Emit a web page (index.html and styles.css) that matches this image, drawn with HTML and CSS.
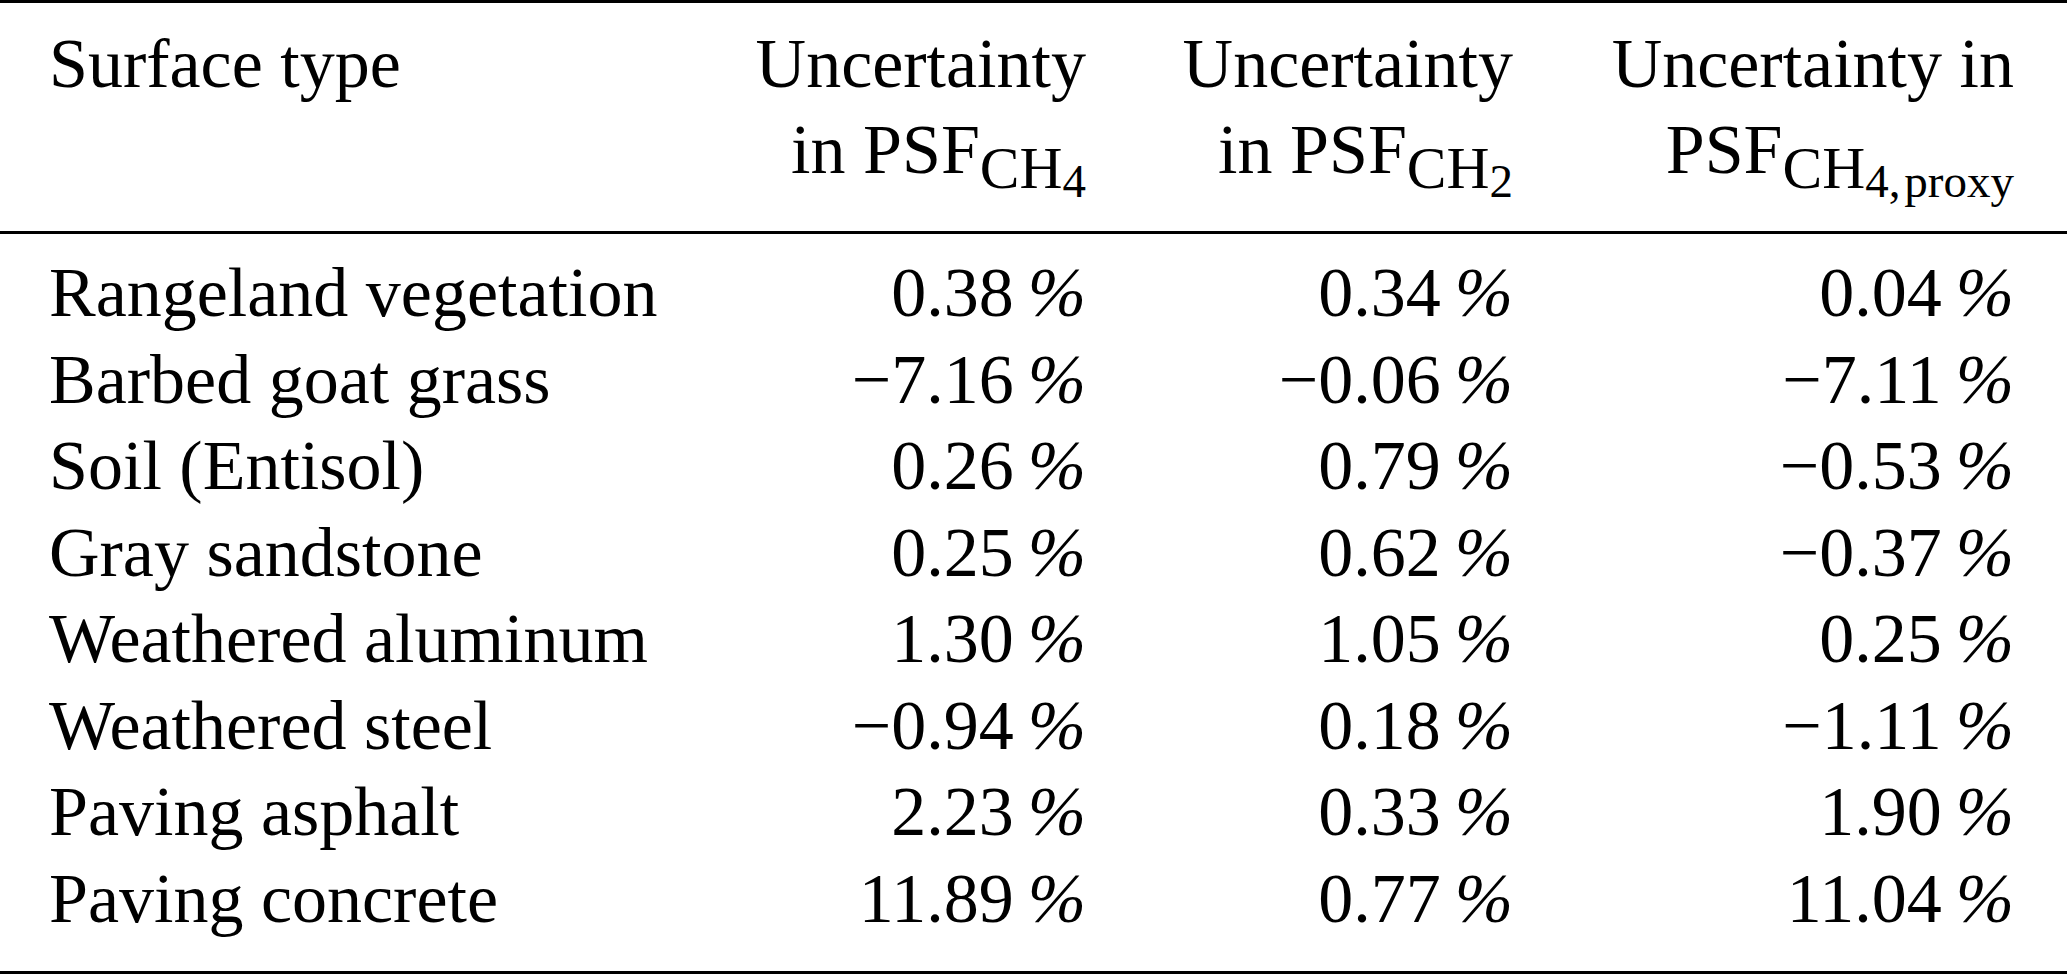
FILE: index.html
```html
<!DOCTYPE html>
<html lang="en">
<head>
<meta charset="utf-8">
<title>Uncertainty in PSF by surface type</title>
<link rel="stylesheet" href="styles.css">
</head>
<body>
<table class="tbl">
  <colgroup>
    <col class="c-name">
    <col class="c-v1">
    <col class="c-v2">
    <col class="c-v3">
  </colgroup>
  <thead>
    <tr>
      <th class="name">Surface type</th>
      <th class="num">Uncertainty<br>in PSF<sub class="s1">CH<sub class="s2">4</sub></sub></th>
      <th class="num">Uncertainty<br>in PSF<sub class="s1">CH<sub class="s2">2</sub></sub></th>
      <th class="num">Uncertainty in<br>PSF<sub class="s1">CH<sub class="s2">4,&#8202;proxy</sub></sub></th>
    </tr>
  </thead>
  <tbody>
    <tr><td class="name">Rangeland vegetation</td><td class="num">0.38<span class="pct">%</span></td><td class="num">0.34<span class="pct">%</span></td><td class="num">0.04<span class="pct">%</span></td></tr>
    <tr><td class="name">Barbed goat grass</td><td class="num">&minus;7.16<span class="pct">%</span></td><td class="num">&minus;0.06<span class="pct">%</span></td><td class="num">&minus;7.11<span class="pct">%</span></td></tr>
    <tr><td class="name">Soil (Entisol)</td><td class="num">0.26<span class="pct">%</span></td><td class="num">0.79<span class="pct">%</span></td><td class="num">&minus;0.53<span class="pct">%</span></td></tr>
    <tr><td class="name">Gray sandstone</td><td class="num">0.25<span class="pct">%</span></td><td class="num">0.62<span class="pct">%</span></td><td class="num">&minus;0.37<span class="pct">%</span></td></tr>
    <tr><td class="name">Weathered aluminum</td><td class="num">1.30<span class="pct">%</span></td><td class="num">1.05<span class="pct">%</span></td><td class="num">0.25<span class="pct">%</span></td></tr>
    <tr><td class="name">Weathered steel</td><td class="num">&minus;0.94<span class="pct">%</span></td><td class="num">0.18<span class="pct">%</span></td><td class="num">&minus;1.11<span class="pct">%</span></td></tr>
    <tr><td class="name">Paving asphalt</td><td class="num">2.23<span class="pct">%</span></td><td class="num">0.33<span class="pct">%</span></td><td class="num">1.90<span class="pct">%</span></td></tr>
    <tr><td class="name">Paving concrete</td><td class="num">11.89<span class="pct">%</span></td><td class="num">0.77<span class="pct">%</span></td><td class="num">11.04<span class="pct">%</span></td></tr>
  </tbody>
</table>
</body>
</html>
```
FILE: styles.css
```css
html, body {
  margin: 0;
  padding: 0;
  background: #ffffff;
}

body {
  font-family: "Liberation Serif", "Times New Roman", serif;
  font-size: 70px;
  color: #000000;
}

.tbl {
  width: 2067px;
  border-collapse: collapse;
  table-layout: fixed;
  border-top: 3px solid #000;
  border-bottom: 3px solid #000;
}

.c-name { width: 600px; }
.c-v1 { width: 486px; }
.c-v2 { width: 427px; }
.c-v3 { width: 554px; }

.tbl th,
.tbl td {
  padding: 0;
  font-weight: normal;
  white-space: nowrap;
  vertical-align: top;
}

.tbl thead th {
  line-height: 86px;
  padding-top: 18px;
  padding-bottom: 38px;
  border-bottom: 3px solid #000;
}

.tbl tbody td {
  line-height: 86.5px;
}

.tbl tbody tr:first-child td {
  padding-top: 16px;
}

.tbl tbody tr:last-child td {
  padding-bottom: 29px;
}

.name {
  text-align: left;
  padding-left: 49px !important;
}

.num {
  text-align: right;
}

.tbl tr > :last-child {
  padding-right: 53px;
}

.pct {
  font-style: italic;
  margin-left: 14px;
}

.s1 {
  font-size: 0.85em;
  line-height: 0;
  vertical-align: -0.25em;
}

.s2 {
  font-size: 0.79em;
  line-height: 0;
  vertical-align: -0.19em;
}
```
